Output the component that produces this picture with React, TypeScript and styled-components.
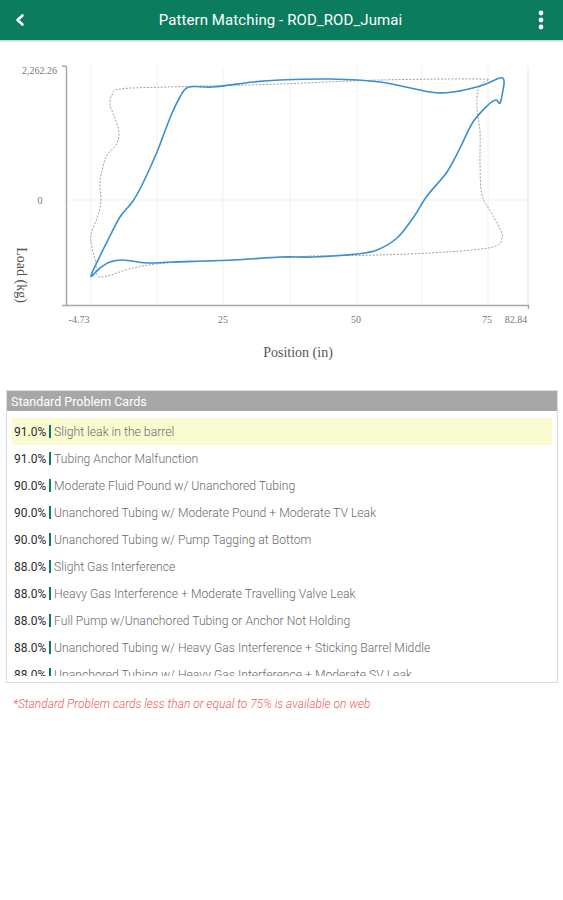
import React from "react";
import styled, { createGlobalStyle } from "styled-components";

const GlobalStyle = createGlobalStyle`
  html, body { margin: 0; padding: 0; background: #ffffff; }
  body { font-family: Roboto, "Noto Sans", "Liberation Sans", sans-serif; }
  * { box-sizing: border-box; }
`;

const Page = styled.div`
  width: 563px;
  min-height: 900px;
  background: #fff;
  display: flex;
  flex-direction: column;
`;

const TopBar = styled.header`
  height: 40px;
  background: #0b7c5e;
  display: flex;
  align-items: center;
  justify-content: space-between;
  padding: 0 10px 0 8px;
  box-shadow: 0 1px 2px rgba(0, 0, 0, 0.25);
  position: relative;
  z-index: 1;
`;

const IconButton = styled.div`
  width: 24px;
  height: 24px;
  display: flex;
  align-items: center;
  justify-content: center;
`;

const Title = styled.h1`
  margin: 0;
  flex: 1;
  text-align: center;
  color: #ffffff;
  font-size: 15px;
  font-weight: 400;
  letter-spacing: 0.1px;
`;

const ChartWrap = styled.div`
  height: 350px;
  display: flex;
`;

const Card = styled.section`
  margin: 0 5px 0 6px;
  border: 1px solid #dcdcdc;
  display: flex;
  flex-direction: column;
  padding-bottom: 6px;
`;

const CardHeader = styled.div`
  height: 20px;
  background: #a7a7a7;
  color: #fff;
  font-size: 12.5px;
  display: flex;
  align-items: center;
  padding-left: 4px;
`;

const List = styled.div`
  height: 265px;
  overflow: hidden;
  padding: 7px 5px 0 5px;
  display: flex;
  flex-direction: column;
`;

const Row = styled.div<{ $active?: boolean }>`
  height: 27px;
  flex-shrink: 0;
  display: flex;
  align-items: center;
  padding-left: 2px;
  background: ${(p) => (p.$active ? "#fbfbd2" : "transparent")};
  font-size: 12px;
`;

const Pct = styled.span`
  color: #2b2b2b;
  width: 34px;
`;

const Bar = styled.span`
  width: 2px;
  height: 13px;
  background: #0b7c5e;
  margin: 0 3px 0 1px;
`;

const Label = styled.span`
  color: #6a6a6a;
  font-weight: 300;
  font-size: 12.2px;
  white-space: nowrap;
`;

const Note = styled.p`
  margin: 13px 0 0 13px;
  color: #ef5b5b;
  font-size: 12px;
  line-height: 16px;
  font-style: italic;
  font-weight: 300;
`;

type P = [number, number];

function smoothPath(pts: P[], closed: boolean): string {
  const n = pts.length;
  const get = (i: number) => {
    if (closed) return pts[(i + n) % n];
    return pts[Math.max(0, Math.min(n - 1, i))];
  };
  let d = `M${pts[0][0]},${pts[0][1]}`;
  const last = closed ? n : n - 1;
  for (let i = 0; i < last; i++) {
    const p0 = get(i - 1);
    const p1 = get(i);
    const p2 = get(i + 1);
    const p3 = get(i + 2);
    const t = 6;
    const c1x = p1[0] + (p2[0] - p0[0]) / t;
    const c1y = p1[1] + (p2[1] - p0[1]) / t;
    const c2x = p2[0] - (p3[0] - p1[0]) / t;
    const c2y = p2[1] - (p3[1] - p1[1]) / t;
    d += ` C${c1x.toFixed(1)},${c1y.toFixed(1)} ${c2x.toFixed(1)},${c2y.toFixed(1)} ${p2[0]},${p2[1]}`;
  }
  return d;
}

const bluePts: P[] = [
  [91, 276], [100, 256], [110, 236], [120, 217], [133, 201], [143, 183],
  [157, 152], [170, 118], [180, 97], [189, 87], [213, 87], [253, 82],
  [280, 80], [330, 79], [380, 82], [430, 92], [453, 92], [480, 86],
  [500, 78], [504, 81], [503, 90], [500, 103], [496, 100], [488, 105],
  [473, 122], [460, 148], [447, 172], [427, 196], [413, 218], [397, 238],
  [377, 250], [357, 254], [313, 257], [280, 257], [233, 260], [173, 262],
  [147, 263], [123, 260], [110, 262], [100, 268],
];

const greyPts: P[] = [
  [100, 277], [96, 262], [92, 248], [91, 235], [97, 218], [101, 202],
  [100, 182], [106, 157], [116, 145], [119, 133], [115, 118], [110, 105],
  [112, 95], [120, 89], [167, 87], [280, 84], [380, 80], [480, 79],
  [484, 82], [478, 90], [477, 108], [480, 132], [480, 165], [482, 195],
  [492, 214], [501, 231], [502, 238], [493, 247], [447, 252], [380, 255],
  [313, 256], [233, 260], [167, 263], [133, 268],
];

const Chart: React.FC = () => {
  const grid = [91, 157, 223, 290, 357, 422, 488];
  const ticks: { x: number; t: string }[] = [
    { x: 79, t: "-4.73" },
    { x: 223, t: "25" },
    { x: 356, t: "50" },
    { x: 487, t: "75" },
    { x: 516, t: "82.84" },
  ];
  return (
    <svg width="563" height="350" viewBox="0 40 563 350">
      <g stroke="#f0f0f0" strokeWidth="1">
        {grid.map((x) => (
          <line key={x} x1={x} y1={66} x2={x} y2={305} />
        ))}
        <line x1={528} y1={66} x2={528} y2={305} stroke="#e4e4e4" />
        <line x1={66} y1={200} x2={528} y2={200} />
      </g>
      <g stroke="#a8a8a8" strokeWidth="1.5" fill="none">
        <line x1={66.5} y1={66} x2={66.5} y2={305} />
        <line x1={66} y1={305.5} x2={529} y2={305.5} />
        <line x1={62} y1={66} x2={66} y2={66} />
        <line x1={62} y1={305.5} x2={66} y2={305.5} />
        <line x1={528.5} y1={305} x2={528.5} y2={309} />
      </g>
      <path
        d={smoothPath(greyPts, true)}
        fill="none"
        stroke="#a0a0a0"
        strokeWidth="1"
        strokeDasharray="2 1.5"
      />
      <path
        d={smoothPath(bluePts, true)}
        fill="none"
        stroke="#3a8fd0"
        strokeWidth="1.6"
      />
      <g fontFamily='"Liberation Serif", "DejaVu Serif", serif' fill="#777" fontSize="10">
        <text x={57} y={74} textAnchor="end">2,262.26</text>
        <text x={40} y={204} textAnchor="middle">0</text>
        {ticks.map((k) => (
          <text key={k.t} x={k.x} y={323} textAnchor="middle">{k.t}</text>
        ))}
      </g>
      <g fontFamily='"Liberation Serif", "DejaVu Serif", serif' fill="#555" fontSize="14">
        <text x={298} y={357} textAnchor="middle">Position (in)</text>
        <text x={0} y={0} textAnchor="middle" transform="translate(17 275) rotate(90)">
          Load (kg)
        </text>
      </g>
    </svg>
  );
};

const cards: { pct: string; label: string }[] = [
  { pct: "91.0%", label: "Slight leak in the barrel" },
  { pct: "91.0%", label: "Tubing Anchor Malfunction" },
  { pct: "90.0%", label: "Moderate Fluid Pound w/ Unanchored Tubing" },
  { pct: "90.0%", label: "Unanchored Tubing w/ Moderate Pound + Moderate TV Leak" },
  { pct: "90.0%", label: "Unanchored Tubing w/ Pump Tagging at Bottom" },
  { pct: "88.0%", label: "Slight Gas Interference" },
  { pct: "88.0%", label: "Heavy Gas Interference + Moderate Travelling Valve Leak" },
  { pct: "88.0%", label: "Full Pump w/Unanchored Tubing or Anchor Not Holding" },
  { pct: "88.0%", label: "Unanchored Tubing w/ Heavy Gas Interference + Sticking Barrel Middle" },
  { pct: "88.0%", label: "Unanchored Tubing w/ Heavy Gas Interference + Moderate SV Leak" },
  { pct: "87.0%", label: "Heavy Fluid Pound" },
];

export default function App() {
  return (
    <Page>
      <GlobalStyle />
      <TopBar>
        <IconButton>
          <svg width="14" height="14" viewBox="0 0 14 14">
            <path d="M9.5 2.5 L4.5 7 L9.5 11.5" fill="none" stroke="#fff" strokeWidth="2.6" strokeLinecap="round" strokeLinejoin="round" />
          </svg>
        </IconButton>
        <Title>Pattern Matching - ROD_ROD_Jumai</Title>
        <IconButton>
          <svg width="8" height="22" viewBox="0 0 8 22">
            <circle cx="4" cy="4" r="2.4" fill="#fff" />
            <circle cx="4" cy="11" r="2.4" fill="#fff" />
            <circle cx="4" cy="18" r="2.4" fill="#fff" />
          </svg>
        </IconButton>
      </TopBar>
      <ChartWrap>
        <Chart />
      </ChartWrap>
      <Card>
        <CardHeader>Standard Problem Cards</CardHeader>
        <List>
          {cards.map((c, i) => (
            <Row key={i} $active={i === 0}>
              <Pct>{c.pct}</Pct>
              <Bar />
              <Label>{c.label}</Label>
            </Row>
          ))}
        </List>
      </Card>
      <Note>*Standard Problem cards less than or equal to 75% is available on web</Note>
    </Page>
  );
}
